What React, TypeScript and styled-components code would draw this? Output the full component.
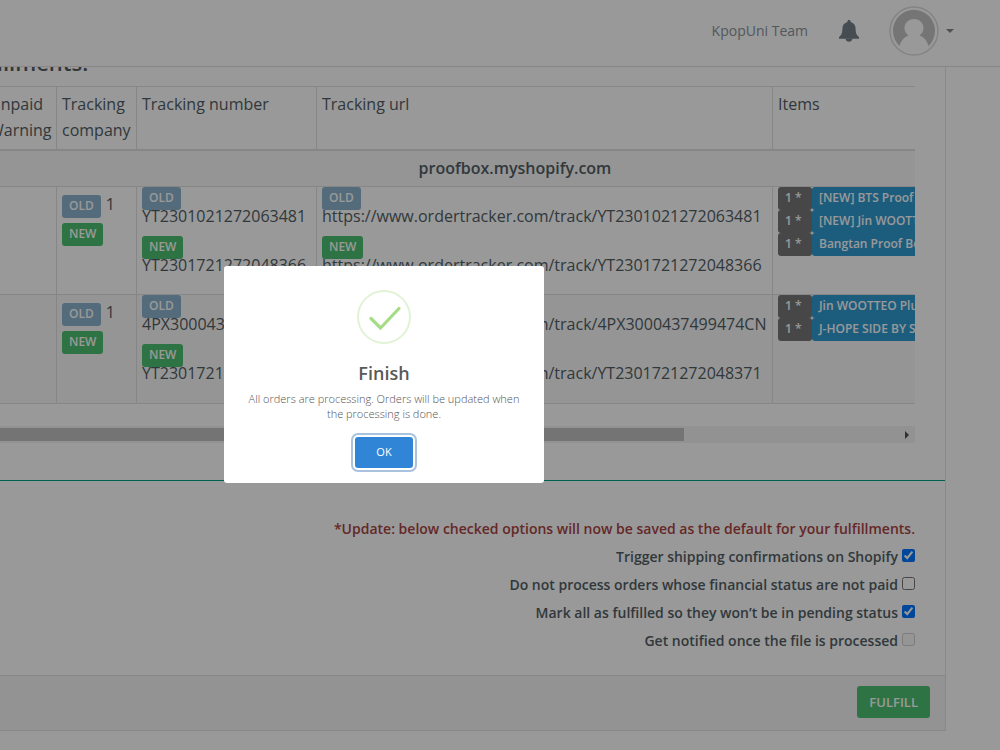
import React from 'react';
import styled, { createGlobalStyle } from 'styled-components';

const GlobalStyle = createGlobalStyle`
  * { box-sizing: border-box; }
  body {
    margin: 0;
    background: #fff;
    color: #525e64;
    font-family: "Open Sans", "Noto Sans", sans-serif;
    font-size: 16px;
    line-height: 26px;
    overflow: hidden;
  }
`;

const Page = styled.div`
  min-height: 100vh;
  overflow: hidden;
  background: #fff;
`;

const TopBar = styled.header`
  position: relative;
  z-index: 1;
  display: flex;
  align-items: center;
  justify-content: flex-end;
  height: 67px;
  padding: 0 46px 4px 20px;
  background: #fff;
  border-bottom: 1px solid #e2e2e2;
`;

const UserName = styled.span`
  margin-right: 30px;
  font-size: 14px;
  color: #8a939a;
`;

const IconButton = styled.button`
  display: flex;
  align-items: center;
  gap: 7px;
  padding: 0;
  border: 0;
  background: none;
  color: #748189;
`;

const BellButton = styled(IconButton)`
  margin-right: 29px;
`;

const Panel = styled.main`
  margin: -20px 54px 0 -40px;
  border: 1px solid #e4e4e4;
  border-top: 0;
`;

const PanelBody = styled.section`
  padding: 0 30px 0 23px;
`;

const Heading = styled.h2`
  height: 39px;
  margin: 0 0 0 -27px;
  font-size: 22px;
  font-weight: 600;
  line-height: 30px;
`;

const TableViewport = styled.div`
  overflow: hidden;
`;

const Table = styled.table`
  width: 1062px;
  table-layout: fixed;
  border-spacing: 0;
  border-top: 1px solid #e2e2e2;
`;

const HeadCell = styled.th<{ $w: number }>`
  width: ${(p) => p.$w}px;
  height: 64px;
  padding: 4px 5px;
  text-align: left;
  vertical-align: top;
  font-weight: 400;
  border-right: 1px solid #dfdfdf;
  border-bottom: 2px solid #dfdfdf;
`;

const GroupCell = styled.th`
  height: 36px;
  padding: 0 0 2px;
  font-weight: 600;
  background: #f9f9f9;
  border-bottom: 1px solid #dfdfdf;
`;

const Row = styled.tr<{ $striped?: boolean }>`
  height: ${(p) => (p.$striped ? 109 : 108)}px;
  background: ${(p) => (p.$striped ? '#f9f9f9' : '#fff')};
`;

const Cell = styled.td<{ $top?: number }>`
  padding: ${(p) => p.$top ?? 0}px 5px 0;
  vertical-align: top;
  white-space: nowrap;
  border-right: 1px solid #dfdfdf;
  border-bottom: 1px solid #dfdfdf;
`;

const tones = { old: '#8ab3cd', green: '#4cc070', grey: '#777777', blue: '#2f9bd3' };

const Badge = styled.span<{ $tone: keyof typeof tones }>`
  display: inline-block;
  height: 23px;
  padding: 0 7px;
  border-radius: 3px;
  background: ${(p) => tones[p.$tone]};
  color: #fff;
  font-size: 12px;
  font-weight: 600;
  line-height: 22px;
`;

const CompanyStack = styled.div`
  display: flex;
  flex-direction: column;
  align-items: flex-start;
  gap: 5px;
`;

const CompanyLine = styled.div`
  display: flex;
  gap: 5px;
  height: 23px;
  line-height: 18px;
`;

const TrackStack = styled.div`
  display: flex;
  flex-direction: column;
  gap: 14px;
`;

const TrackEntry = styled.div`
  display: flex;
  flex-direction: column;
  align-items: flex-start;
  line-height: 12px;
`;

const ItemList = styled.ul`
  margin: 0;
  padding: 0;
  list-style: none;
`;

const Item = styled.li`
  display: flex;
  height: 23px;
`;

const Quantity = styled(Badge)`
  width: 34px;
`;

const ScrollTrack = styled.div`
  display: flex;
  align-items: center;
  justify-content: space-between;
  height: 17px;
  margin-top: 22px;
  padding-right: 6px;
  background: #f3f3f3;
`;

const ScrollThumb = styled.div`
  width: 75.7%;
  height: 13px;
  background: #c1c1c1;
`;

const Options = styled.form`
  display: flex;
  flex-direction: column;
  align-items: flex-end;
  margin-top: 37px;
  padding: 34px 30px 20px 24px;
  border-top: 1px solid #00a188;
  font-size: 14px;
  font-weight: 600;
  line-height: 28px;
`;

const Notice = styled.p`
  margin: 0;
  color: #a94442;
`;

const Option = styled.label`
  display: flex;
  align-items: center;
  gap: 4px;

  input {
    width: 13px;
    height: 13px;
    margin: 0 0 3px;
  }
`;

const PanelFooter = styled.footer`
  display: flex;
  justify-content: flex-end;
  padding: 10px 15px 12px;
  background: #f5f5f5;
  border-top: 1px solid #e2e2e2;
`;

const FulfillButton = styled.button`
  height: 32px;
  padding: 0 12px;
  border: 0;
  border-radius: 3px;
  background: #4cc070;
  color: #fff;
  font: 600 13px/32px "Open Sans", sans-serif;
`;

const Overlay = styled.div`
  position: fixed;
  inset: 0;
  z-index: 10;
  display: flex;
  align-items: center;
  justify-content: center;
  padding: 0 232px 1px 0;
  background: rgba(0, 0, 0, 0.4);
`;

const Dialog = styled.div`
  display: flex;
  flex-direction: column;
  align-items: center;
  width: 320px;
  padding: 24px 20px 15px;
  border-radius: 3px;
  background: #fff;
  text-align: center;
`;

const DialogTitle = styled.h1`
  margin: 16px 0 5px;
  color: #595959;
  font-size: 18px;
  font-weight: 600;
  line-height: 26px;
`;

const DialogText = styled.p`
  margin: 0 0 16px;
  color: #545454;
  font-size: 11px;
  font-weight: 300;
  line-height: 15px;
`;

const OkButton = styled.button`
  width: 58px;
  height: 31px;
  padding: 0 0 2px;
  border: 0;
  border-radius: 3px;
  background: #3085d6;
  box-shadow: 0 0 0 2px #fff, 0 0 0 4px #a9c3de;
  color: #fff;
  font: 500 11px/28px "Open Sans", sans-serif;
`;

const BellIcon = () => (
  <svg width="22" height="22" viewBox="0 0 22 22" fill="currentColor" aria-hidden="true">
    <path d="M11 0c1 0 1.600.7 1.600 1.600v.5c3.200.8 4.900 3.200 5 6.400.1 4.500.8 6.500 3.400 8.500v1.800H1V17c2.600-2 3.300-4 3.400-8.500.1-3.200 1.800-5.600 5-6.400v-.5C9.400.7 10 0 11 0z" />
    <path d="M7.500 18.500h7c-.2 2-1.700 3.300-3.500 3.300s-3.300-1.300-3.500-3.300z" />
  </svg>
);

const Avatar = () => (
  <svg width="50" height="50" viewBox="0 0 50 50" aria-hidden="true">
    <circle cx="25" cy="25" r="24" fill="#fff" stroke="#dcdcdc" strokeWidth="1.500" />
    <path d="M10.500 40A21 21 0 1 1 39.500 40C38 34.500 35 31 30.500 29.500c2.500-2 4-4.500 4-7.500 0-5-4-9-9.500-9s-9.500 4-9.500 9c0 3 1.500 5.500 4 7.500C15 31 12 34.500 10.500 40z" fill="#c4c4c4" />
  </svg>
);

const Caret = () => (
  <svg width="8" height="4" viewBox="0 0 8 4" aria-hidden="true">
    <path d="M0 0h8L4 4z" fill="#888" />
  </svg>
);

const SuccessIcon = () => (
  <svg width="54" height="54" viewBox="0 0 54 54" fill="none" aria-hidden="true">
    <circle cx="27" cy="27" r="26" stroke="#a5dc86" strokeOpacity="0.35" strokeWidth="2" />
    <path d="M14 28.500l9.500 9.500L42 18.500" stroke="#a5dc86" strokeWidth="3.200" strokeLinecap="round" />
  </svg>
);

const ScrollArrow = () => (
  <svg width="4" height="8" viewBox="0 0 4 8" aria-hidden="true">
    <path d="M0 0l4 4-4 4z" fill="#505050" />
  </svg>
);

const baseUrl = 'https://www.ordertracker.com/track/';

const orders = [
  {
    oldNumber: 'YT2301021272063481',
    newNumber: 'YT2301721272048366',
    items: ['[NEW] BTS Proof', '[NEW] Jin WOOTTEO', 'Bangtan Proof Box'],
  },
  {
    oldNumber: '4PX3000437499474CN',
    newNumber: 'YT2301721272048371',
    items: ['Jin WOOTTEO Plush', 'J-HOPE SIDE BY SIDE'],
  },
];

const options = [
  { label: 'Trigger shipping confirmations on Shopify', checked: true },
  { label: 'Do not process orders whose financial status are not paid' },
  { label: 'Mark all as fulfilled so they won’t be in pending status', checked: true },
  { label: 'Get notified once the file is processed', disabled: true },
];

const Tracking = ({ before, after }: { before: string; after: string }) => (
  <TrackStack>
    <TrackEntry><Badge $tone="old">OLD</Badge>{before}</TrackEntry>
    <TrackEntry><Badge $tone="green">NEW</Badge>{after}</TrackEntry>
  </TrackStack>
);

export default function App() {
  return (
    <Page>
      <GlobalStyle />
      <TopBar>
        <UserName>KpopUni Team</UserName>
        <BellButton aria-label="Notifications"><BellIcon /></BellButton>
        <IconButton aria-label="Account menu"><Avatar /><Caret /></IconButton>
      </TopBar>
      <Panel>
        <PanelBody>
          <Heading>Fulfillments:</Heading>
          <TableViewport>
            <Table>
              <thead>
                <tr>
                  <HeadCell $w={73}>Unpaid Warning</HeadCell>
                  <HeadCell $w={80}>Tracking company</HeadCell>
                  <HeadCell $w={180}>Tracking number</HeadCell>
                  <HeadCell $w={456}>Tracking url</HeadCell>
                  <HeadCell $w={273}>Items</HeadCell>
                </tr>
              </thead>
              <tbody>
                <tr><GroupCell colSpan={5}>proofbox.myshopify.com</GroupCell></tr>
                {orders.map((order, i) => (
                  <Row key={order.oldNumber} $striped={i % 2 === 1}>
                    <Cell />
                    <Cell $top={8}>
                      <CompanyStack>
                        <CompanyLine><Badge $tone="old">OLD</Badge>1</CompanyLine>
                        <Badge $tone="green">NEW</Badge>
                      </CompanyStack>
                    </Cell>
                    <Cell><Tracking before={order.oldNumber} after={order.newNumber} /></Cell>
                    <Cell><Tracking before={baseUrl + order.oldNumber} after={baseUrl + order.newNumber} /></Cell>
                    <Cell>
                      <ItemList>
                        {order.items.map((item) => (
                          <Item key={item}>
                            <Quantity $tone="grey">1 *</Quantity>
                            <Badge $tone="blue">{item}</Badge>
                          </Item>
                        ))}
                      </ItemList>
                    </Cell>
                  </Row>
                ))}
              </tbody>
            </Table>
          </TableViewport>
          <ScrollTrack><ScrollThumb /><ScrollArrow /></ScrollTrack>
        </PanelBody>
        <Options>
          <Notice>*Update: below checked options will now be saved as the default for your fulfillments.</Notice>
          {options.map((o) => (
            <Option key={o.label}>
              {o.label}
              <input type="checkbox" defaultChecked={o.checked} disabled={o.disabled} />
            </Option>
          ))}
        </Options>
        <PanelFooter><FulfillButton>FULFILL</FulfillButton></PanelFooter>
      </Panel>
      <Overlay>
        <Dialog role="dialog" aria-modal="true" aria-labelledby="dialog-title">
          <SuccessIcon />
          <DialogTitle id="dialog-title">Finish</DialogTitle>
          <DialogText>All orders are processing. Orders will be updated when the processing is done.</DialogText>
          <OkButton>OK</OkButton>
        </Dialog>
      </Overlay>
    </Page>
  );
}
